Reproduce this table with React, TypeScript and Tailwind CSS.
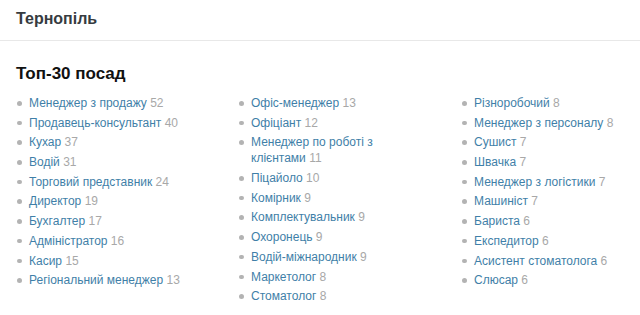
import React from "react";

const cols: [string, number][][] = [
  [
    ["Менеджер з продажу", 52],
    ["Продавець-консультант", 40],
    ["Кухар", 37],
    ["Водій", 31],
    ["Торговий представник", 24],
    ["Директор", 19],
    ["Бухгалтер", 17],
    ["Адміністратор", 16],
    ["Касир", 15],
    ["Регіональний менеджер", 13],
  ],
  [
    ["Офіс-менеджер", 13],
    ["Офіціант", 12],
    ["Менеджер по роботі з клієнтами", 11],
    ["Піцайоло", 10],
    ["Комірник", 9],
    ["Комплектувальник", 9],
    ["Охоронець", 9],
    ["Водій-міжнародник", 9],
    ["Маркетолог", 8],
    ["Стоматолог", 8],
  ],
  [
    ["Різноробочий", 8],
    ["Менеджер з персоналу", 8],
    ["Сушист", 7],
    ["Швачка", 7],
    ["Менеджер з логістики", 7],
    ["Машиніст", 7],
    ["Бариста", 6],
    ["Експедитор", 6],
    ["Асистент стоматолога", 6],
    ["Слюсар", 6],
  ],
];

export default function App() {
  return (
    <div className="w-[640px] h-[315px] overflow-hidden bg-white" style={{ fontFamily: '"Liberation Sans", Arial, sans-serif' }}>
      <div className="h-[41px] border-b border-[#e8e8e8] px-4 flex items-center">
        <h1 className="text-[16px] font-bold text-[#363b40] leading-none mt-[-3px]">Тернопіль</h1>
      </div>
      <div className="px-4 pt-[23px]">
        <h2 className="text-[17px] font-bold text-[#111] leading-[20px]">Топ-30 посад</h2>
        <div className="grid grid-cols-[202px_203px_203px] gap-x-5 mt-[11px]">
          {cols.map((col, i) => (
            <ul key={i} className="flex flex-col gap-[3.7px]">
              {col.map(([name, n]) => (
                <li key={name} className="flex text-[12px] leading-[16px]">
                  <span className="w-[13px] shrink-0 flex items-start pt-[6px] pl-[1px]">
                    <span className="block w-[4.5px] h-[4.5px] rounded-full bg-[#b3b3b3]" />
                  </span>
                  <span className="pr-3">
                    <span className="text-[#3f7fa8]">{name}</span>{" "}
                    <span className="text-[#a8a8a8]">{n}</span>
                  </span>
                </li>
              ))}
            </ul>
          ))}
        </div>
      </div>
    </div>
  );
}
